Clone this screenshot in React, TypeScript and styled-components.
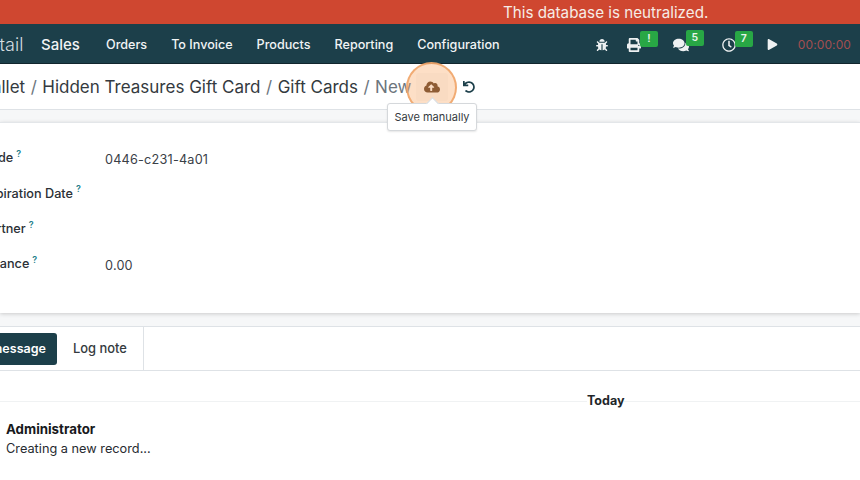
import { createGlobalStyle } from "styled-components";
import styled from "styled-components";
import { FaBug, FaCloudUploadAlt, FaComments, FaPlay, FaPrint, FaRegClock, FaUndo } from "react-icons/fa";

const GlobalStyle = createGlobalStyle`
  html, body {
    margin: 0;
    padding: 0;
    background: #fff;
    overflow: hidden;
  }
  body {
    font-family: Inter, "Liberation Sans", sans-serif;
    color: #212529;
  }
`;

const Page = styled.div`
  position: relative;
  width: 860px;
  height: 480px;
  overflow: hidden;
`;

const Banner = styled.div`
  height: 24px;
  background: #cf4730;
  color: #f6ece6;
  font-size: 15.2px;
  line-height: 25px;
  padding-left: 503px;
  white-space: nowrap;
`;

const NavBar = styled.nav`
  height: 40px;
  padding-top: 2px;
  box-sizing: border-box;
  background: #1c3f4a;
  border-bottom: 1px solid #11262d;
  display: flex;
  align-items: center;
  color: #f1f4f5;
  white-space: nowrap;
`;

const AppName = styled.span`
  font-size: 18px;
  font-weight: 300;
  margin-left: -22px;
  color: #d5dde0;
  width: 63px;
`;

const ModuleName = styled.span`
  font-size: 15px;
  font-weight: 500;
  width: 65px;
`;

const NavItem = styled.span`
  font-size: 12.6px;
  font-weight: 500;
  margin-right: 24px;
`;

const Systray = styled.div`
  margin-left: auto;
  display: flex;
  align-items: center;
  padding-right: 9px;
`;

const TrayIcon = styled.span<{ $gap: number }>`
  position: relative;
  display: flex;
  color: #eef1f2;
  font-size: 14px;
  margin-right: ${(p) => p.$gap}px;
`;

const Badge = styled.span`
  position: absolute;
  top: -7px;
  left: 13px;
  min-width: 18px;
  height: 16px;
  border-radius: 2px;
  background: #28a745;
  color: #e8f5ea;
  font-size: 10.5px;
  font-weight: 600;
  line-height: 15px;
  text-align: center;
`;

const Timer = styled.span`
  color: #a34e50;
  font-size: 12px;
  letter-spacing: 0.1px;
`;

const ControlPanel = styled.div`
  height: 45px;
  display: flex;
  align-items: center;
  white-space: nowrap;
  border-bottom: 1px solid #dee2e6;
`;

const Crumbs = styled.div`
  margin-left: -24px;
  font-size: 17px;
  color: #343a40;
  display: flex;
  align-items: center;
`;

const Slash = styled.span`
  color: #6c757d;
  margin: 0 5.5px;
`;

const Current = styled.span`
  color: #6c757d;
`;

const SaveButton = styled.span`
  display: flex;
  color: #4d2c14;
  background: #f9f9f9;
  border-radius: 3px;
  font-size: 16px;
  padding: 6px 8px;
  margin-left: 5px;
`;

const UndoButton = styled.span`
  display: flex;
  color: #1c3f4a;
  font-size: 12px;
  margin-left: 15px;
`;

const Strip = styled.div<{ $height: number }>`
  height: ${(p) => p.$height}px;
  background: #f6f7f8;
`;

const Sheet = styled.section`
  height: 191px;
  box-sizing: border-box;
  background: #fff;
  border-top: 1px solid #e3e6e9;
  box-shadow: 0 1px 4px rgba(0, 0, 0, 0.18);
  padding-top: 17px;
  position: relative;
`;

const FormRow = styled.div`
  height: 35.4px;
  display: grid;
  grid-template-columns: 124px 1fr;
  margin-left: -19px;
  align-items: center;
  font-size: 12.7px;
`;

const Label = styled.label`
  font-weight: 500;
  color: #2b3036;
  white-space: nowrap;
`;

const Hint = styled.sup`
  color: #1f7f8c;
  font-size: 9px;
  font-weight: 600;
  margin-left: 3px;
  line-height: 0;
`;

const Value = styled.span`
  color: #3a4047;
  letter-spacing: 0.2px;
  padding-top: 3px;
`;

const ChatterBar = styled.div`
  height: 43px;
  display: flex;
  align-items: center;
  border-top: 1px solid #dee2e6;
  border-bottom: 1px solid #dee2e6;
`;

const SendButton = styled.span`
  background: #1c3f4a;
  color: #fff;
  font-size: 12.5px;
  font-weight: 600;
  height: 32px;
  line-height: 32px;
  border-radius: 3px;
  padding: 0 11px 0 12px;
  margin-left: -55px;
  white-space: nowrap;
`;

const LogTab = styled.span`
  height: 43px;
  line-height: 43px;
  font-size: 12.9px;
  font-weight: 500;
  color: #343a40;
  padding: 0 16px 0 16px;
  border-right: 1px solid #dee2e6;
`;

const DateLine = styled.div`
  margin-top: 22px;
  height: 8px;
  border-bottom: 1px solid #f0f2f3;
  text-align: center;
  position: relative;
`;

const DateLabel = styled.span`
  position: absolute;
  left: 587px;
  top: 0;
  font-size: 12.5px;
  font-weight: 700;
  color: #212529;
  background: #fff;
`;

const Message = styled.div`
  padding: 18px 0 0 6px;
  line-height: 19px;
`;

const Author = styled.div`
  font-size: 13.3px;
  font-weight: 700;
  color: #17191c;
`;

const Body = styled.div`
  font-size: 12.75px;
  color: #272b30;
`;

const Highlight = styled.div`
  position: absolute;
  left: 406px;
  top: 62px;
  width: 51px;
  height: 51px;
  box-sizing: border-box;
  border-radius: 50%;
  border: 2px solid rgba(240, 165, 105, 0.9);
  background: rgba(250, 170, 105, 0.38);
`;

const Tooltip = styled.div`
  position: absolute;
  left: 387px;
  top: 103px;
  width: 90px;
  height: 28px;
  box-sizing: border-box;
  background: #fff;
  border: 1px solid #d5d8db;
  border-radius: 3px;
  box-shadow: 0 1px 2px rgba(0, 0, 0, 0.1);
  font-size: 11px;
  line-height: 27px;
  text-align: center;
  color: #343a40;
  white-space: nowrap;

  &:before {
    content: "";
    position: absolute;
    left: 40px;
    top: -5px;
    width: 8px;
    height: 8px;
    background: #fff;
    border-left: 1px solid #d5d8db;
    border-top: 1px solid #d5d8db;
    transform: rotate(45deg);
  }
`;

const fields = [
  { label: "Code", value: "0446-c231-4a01" },
  { label: "Expiration Date", value: "" },
  { label: "Partner", value: "" },
  { label: "Balance", value: "0.00" },
];

const navItems = ["Orders", "To Invoice", "Products", "Reporting", "Configuration"];

export default function App() {
  return (
    <Page>
      <GlobalStyle />
      <Banner>This database is neutralized.</Banner>
      <NavBar>
        <AppName>Retail</AppName>
        <ModuleName>Sales</ModuleName>
        {navItems.map((item) => (
          <NavItem key={item}>{item}</NavItem>
        ))}
        <Systray>
          <TrayIcon $gap={19}>
            <FaBug size={12} />
          </TrayIcon>
          <TrayIcon $gap={32}>
            <FaPrint />
            <Badge>!</Badge>
          </TrayIcon>
          <TrayIcon $gap={33}>
            <FaComments size={16} />
            <Badge>5</Badge>
          </TrayIcon>
          <TrayIcon $gap={31}>
            <FaRegClock />
            <Badge>7</Badge>
          </TrayIcon>
          <TrayIcon $gap={20}>
            <FaPlay size={11} />
          </TrayIcon>
          <Timer>00:00:00</Timer>
        </Systray>
      </NavBar>
      <ControlPanel>
        <Crumbs>
          Wallet
          <Slash>/</Slash>
          Hidden Treasures Gift Card
          <Slash>/</Slash>
          Gift Cards
          <Slash>/</Slash>
          <Current>New</Current>
          <SaveButton>
            <FaCloudUploadAlt />
          </SaveButton>
          <UndoButton>
            <FaUndo />
          </UndoButton>
        </Crumbs>
      </ControlPanel>
      <Strip $height={12} />
      <Sheet>
        {fields.map((field) => (
          <FormRow key={field.label}>
            <Label>
              {field.label}
              <Hint>?</Hint>
            </Label>
            <Value>{field.value}</Value>
          </FormRow>
        ))}
      </Sheet>
      <Strip $height={13} />
      <ChatterBar>
        <SendButton>Send message</SendButton>
        <LogTab>Log note</LogTab>
      </ChatterBar>
      <DateLine>
        <DateLabel>Today</DateLabel>
      </DateLine>
      <Message>
        <Author>Administrator</Author>
        <Body>Creating a new record...</Body>
      </Message>
      <Highlight />
      <Tooltip>Save manually</Tooltip>
    </Page>
  );
}
